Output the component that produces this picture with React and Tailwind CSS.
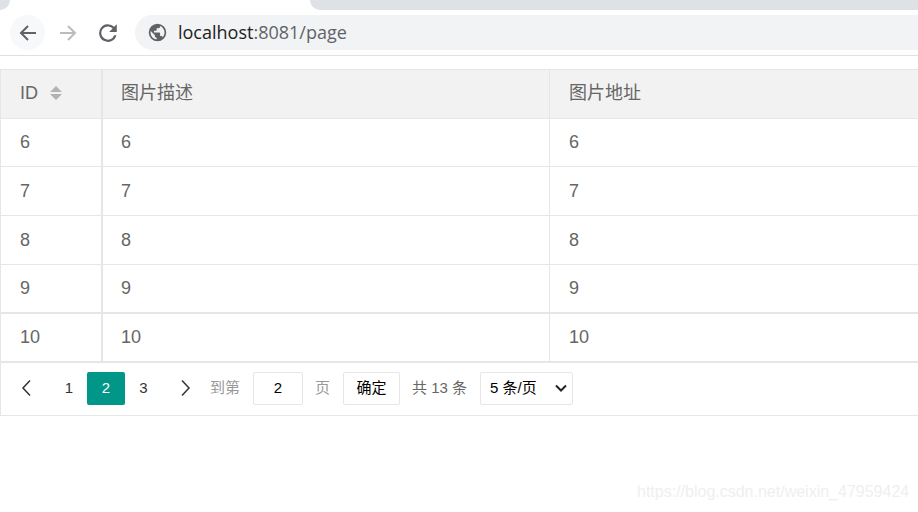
import React from "react";

const FONT = "font-['Liberation_Sans','Noto_Sans_CJK_SC',sans-serif]";
const rows = [
  { v: "6", h: "h-[48px]" },
  { v: "7", h: "h-[49px]" },
  { v: "8", h: "h-[49px]" },
  { v: "9", h: "h-[49px]" },
  { v: "10", h: "h-[49px]" },
];

function Row({ v, h, thick }) {
  return (
    <div className={`flex ${h} ${thick ? "border-b-2" : "border-b"} border-[#e6e6e6] text-[18px] text-[#666]`}>
      <div className="w-[102px] shrink-0 border-r-2 border-[#e6e6e6] pl-[19px] flex items-center">{v}</div>
      <div className="w-[447px] shrink-0 border-r border-[#e6e6e6] pl-[18px] flex items-center">{v}</div>
      <div className="flex-1 pl-[19px] flex items-center">{v}</div>
    </div>
  );
}

export default function App() {
  return (
    <div className={`w-[918px] h-[512px] bg-white overflow-hidden relative ${FONT}`}>
      {/* browser tab strip */}
      <div className="h-[10px] flex justify-between">
        <div className="w-[10px] h-[10px] bg-[#dee1e6] rounded-br-[10px]" />
        <div className="w-[608px] h-[10px] bg-[#dee1e6] rounded-bl-[10px]" />
      </div>
      {/* browser toolbar */}
      <div className="h-[46px] border-b border-[#e0e0e0] flex items-start pt-[5px] pl-[10px]">
        <div className="w-[35px] h-[35px] rounded-full bg-[#f7f8f9] flex items-center justify-center">
          <svg width="20" height="20" viewBox="0 0 20 20" fill="none" stroke="#5f6368" strokeWidth="2">
            <path d="M18 10H3M10 3l-7 7 7 7" />
          </svg>
        </div>
        <div className="w-[45px] h-[35px] flex items-center justify-center">
          <svg width="20" height="20" viewBox="0 0 20 20" fill="none" stroke="#babcbe" strokeWidth="2">
            <path d="M2 10h15M10 3l7 7-7 7" />
          </svg>
        </div>
        <div className="w-[36px] h-[35px] flex items-center justify-center">
          <svg width="22" height="22" viewBox="0 0 20 20">
            <path d="M15.600 4.400A8 8 0 1 0 17.700 12h-2.100a6 6 0 1 1-1.400-6.200L11 9h7V2z" fill="#5f6368" />
          </svg>
        </div>
        <div className="ml-[9px] flex-1 h-[35px] bg-[#f1f3f4] rounded-l-full flex items-center pl-[12px]">
          <svg width="21" height="21" viewBox="0 0 24 24">
            <path
              d="M12 2a10 10 0 1 0 0 20 10 10 0 0 0 0-20zM4 12c0-.6.1-1.200.2-1.800L9 15v1c0 1.100.9 2 2 2v2a8 8 0 0 1-7-8zm13.900 5.400c-.3-.8-1-1.400-1.900-1.400h-1v-3c0-.6-.4-1-1-1H8v-2h2c.6 0 1-.4 1-1V7h2c1.100 0 2-.9 2-2v-.4a8 8 0 0 1 2.900 12.800z"
              fill="#5f6368"
            />
          </svg>
          <span className="ml-[10px] mb-[2px] text-[18px] leading-none font-['Open_Sans',sans-serif] text-[#5f6368]">
            <span className="text-[#202124]">localhost</span>:8081/page
          </span>
        </div>
      </div>

      {/* table */}
      <div className="mt-[13px] border-l border-t border-[#e6e6e6]">
        <div className="flex h-[49px] bg-[#f2f2f2] border-b border-[#e6e6e6] text-[18px] text-[#666]">
          <div className="w-[102px] shrink-0 border-r-2 border-[#e6e6e6] pl-[19px] pb-[2px] flex items-center">
            ID
            <svg className="ml-[11px]" width="14" height="16" viewBox="0 0 14 16" fill="#b2b2b2">
              <path d="M7 1l6 6H1zM1 9h12l-6 6z" />
            </svg>
          </div>
          <div className="w-[447px] shrink-0 border-r border-[#e6e6e6] pl-[18px] pb-[2px] flex items-center">图片描述</div>
          <div className="flex-1 pl-[19px] pb-[2px] flex items-center">图片地址</div>
        </div>
        {rows.map((r) => (
          <Row key={r.v} v={r.v} h={r.h} thick={r.v === "9" || r.v === "10"} />
        ))}

        {/* pagination */}
        <div className="h-[53px] pb-[2px] border-b border-[#e6e6e6] flex items-center text-[15px] text-[#333]">
          <div className="w-[50px] flex justify-center">
            <svg width="12" height="18" viewBox="0 0 12 18" fill="none" stroke="#333" strokeWidth="1.500">
              <path d="M10 1.500 3 9l7 7.500" />
            </svg>
          </div>
          <span className="w-[36px] text-center">1</span>
          <span className="w-[38px] h-[33px] bg-[#009688] rounded-[2px] text-white flex items-center justify-center">2</span>
          <span className="w-[37px] text-center">3</span>
          <div className="w-[47px] flex justify-center">
            <svg width="12" height="18" viewBox="0 0 12 18" fill="none" stroke="#333" strokeWidth="1.500">
              <path d="M2 1.500 9 9l-7 7.500" />
            </svg>
          </div>
          <span className="ml-[1px] text-[#999]">到第</span>
          <div className="ml-[13px] w-[50px] h-[33px] border border-[#e6e6e6] rounded-[2px] flex items-center justify-center text-black">2</div>
          <span className="ml-[12px] text-[#999]">页</span>
          <div className="ml-[13px] w-[57px] h-[33px] border border-[#e6e6e6] rounded-[2px] flex items-center justify-center text-black">确定</div>
          <span className="ml-[12px] text-[#666]">共 13 条</span>
          <div className="ml-[13px] w-[93px] h-[33px] border border-[#e6e6e6] rounded-[2px] flex items-center justify-between pl-[9px] pr-[5px] text-black">
            5 条/页
            <svg width="12" height="8" viewBox="0 0 12 8" fill="none" stroke="#222" strokeWidth="2">
              <path d="M1 1.500 6 6.500l5-5" />
            </svg>
          </div>
        </div>
      </div>

      {/* watermark */}
      <span className="absolute left-[637px] top-[484px] text-[16px] leading-none text-[#efefef]">
        https://blog.csdn.net/weixin_47959424
      </span>
    </div>
  );
}
